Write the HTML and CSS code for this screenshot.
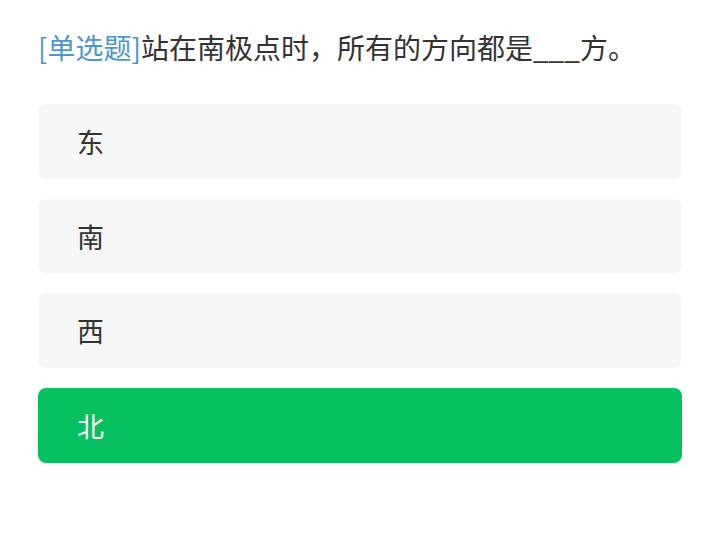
FILE: index.html
```html
<!DOCTYPE html>
<html lang="zh-CN">
<head>
<meta charset="utf-8">
<link rel="stylesheet" href="styles.css">
</head>
<body>
<div class="quiz">
  <div class="question"><span class="tag">[单选题]</span>站在南极点时，所有的方向都是___方。</div>
  <div class="options">
    <div class="option">东</div>
    <div class="option">南</div>
    <div class="option">西</div>
    <div class="option selected">北</div>
  </div>
</div>
</body>
</html>
```
FILE: styles.css
```css
html, body {
  margin: 0;
  padding: 0;
  background: #ffffff;
}
body {
  font-family: "Noto Sans CJK SC", "Noto Sans", sans-serif;
  color: #333333;
}
.quiz {
  padding: 27px 38px 0 38px;
}
.question {
  font-size: 28px;
  line-height: 40px;
  color: #333333;
  white-space: nowrap;
}
.tag {
  color: #4d96d0;
}
.options {
  margin-top: 37px;
  display: flex;
  flex-direction: column;
  gap: 19.5px;
}
.option {
  height: 75px;
  box-sizing: border-box;
  display: flex;
  align-items: center;
  padding-left: 39px;
  background: #f7f7f7;
  border-radius: 8px;
  font-size: 27px;
  color: #333333;
}
.option.selected {
  background: #07c160;
  color: #ffffff;
}
```
